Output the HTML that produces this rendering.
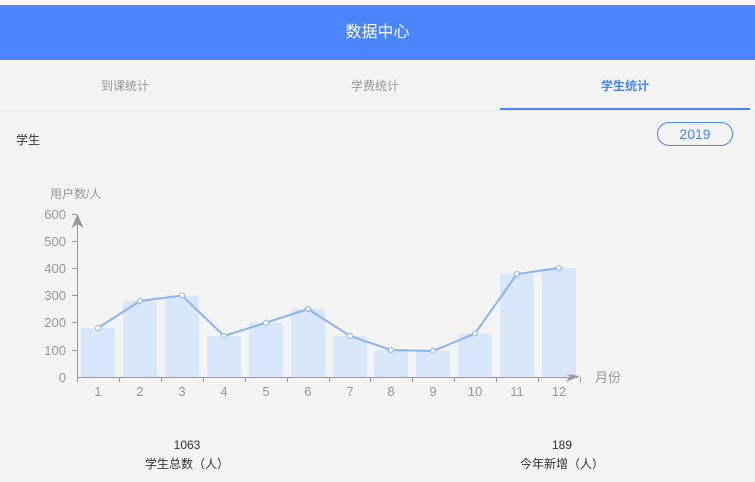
<!DOCTYPE html>
<html><head><meta charset="utf-8"><style>
body{margin:0;width:755px;height:482px;background:#f4f4f4;font-family:"Liberation Sans","Noto Sans CJK SC",sans-serif;position:relative;overflow:hidden}
.hd{position:absolute;top:5px;left:0;width:755px;height:55px;background:#4a84ff;color:#fff;font-size:16px;text-align:center;line-height:55px}
.tab{position:absolute;top:60px;height:50px;line-height:52px;font-size:12px;color:#999;text-align:center;width:250px}
.line{position:absolute;top:110px;left:0;width:755px;height:1px;background:#e6ecf5}
.ul{position:absolute;top:108px;left:500px;width:250px;height:2px;background:#4a84ff}
.t{position:absolute;font-size:12px;color:#333}
.yr{position:absolute;left:657px;top:122px;width:74px;height:22px;border:1px solid #4a84ff;border-radius:12px;color:#4a84ff;font-size:14px;text-align:center;line-height:22px}
.st{position:absolute;text-align:center;font-size:12px;color:#333;width:120px;line-height:19px}
</style></head><body>
<div class="hd">数据中心</div>
<div class="tab" style="left:0">到课统计</div>
<div class="tab" style="left:250px">学费统计</div>
<div class="tab" style="left:500px;color:#4a84ff;font-weight:bold">学生统计</div>
<div class="line"></div><div class="ul"></div>
<div class="t" style="left:16px;top:131px">学生</div>
<div class="yr">2019</div>
<svg width="755" height="482" style="position:absolute;left:0;top:0" font-family="Liberation Sans,Noto Sans CJK SC,sans-serif">
<g fill="#d8e7fb">
<rect x="81" y="328" width="34" height="49"/><rect x="123" y="301" width="34" height="76"/><rect x="165" y="295.5" width="34" height="81.5"/><rect x="207" y="336" width="34" height="41"/><rect x="249" y="322.7" width="34" height="54.3"/><rect x="291" y="309" width="34" height="68"/><rect x="333" y="336" width="34" height="41"/><rect x="374" y="350" width="34" height="27"/><rect x="416" y="351" width="34" height="26"/><rect x="458" y="333.5" width="34" height="43.5"/><rect x="500" y="274" width="34" height="103"/><rect x="542" y="268" width="34" height="109"/>
</g>
<g fill="#999" font-size="13" text-anchor="end">
<text x="66" y="219">600</text><text x="66" y="246">500</text><text x="66" y="273">400</text><text x="66" y="300">300</text><text x="66" y="327">200</text><text x="66" y="355">100</text><text x="66" y="382">0</text>
</g>
<text x="50" y="198" fill="#999" font-size="12">用户数/人</text>
<text x="595" y="382" fill="#999" font-size="13">月份</text>
<g stroke="#999" stroke-width="1">
<line x1="77.5" y1="222" x2="77.5" y2="377"/><line x1="77" y1="377.5" x2="578" y2="377.5"/>
<line x1="72" y1="214.5" x2="77" y2="214.5"/><line x1="72" y1="241.5" x2="77" y2="241.5"/><line x1="72" y1="268.5" x2="77" y2="268.5"/><line x1="72" y1="295.5" x2="77" y2="295.5"/><line x1="72" y1="322.5" x2="77" y2="322.5"/><line x1="72" y1="350.5" x2="77" y2="350.5"/>
<path d="M77.5 377v5M119.5 377v5M161.5 377v5M203.5 377v5M245.5 377v5M287.5 377v5M329.5 377v5M370.5 377v5M412.5 377v5M454.5 377v5M496.5 377v5M538.5 377v5M580.5 377v5"/>
</g>
<path d="M77.5 214l-6 14 6-4 6 4z" fill="#999"/>
<path d="M580 376l-14 6 4-6-4-2z" fill="#999"/>
<g fill="#999" font-size="13" text-anchor="middle">
<text x="98" y="396">1</text><text x="140" y="396">2</text><text x="182" y="396">3</text><text x="224" y="396">4</text><text x="266" y="396">5</text><text x="308" y="396">6</text><text x="350" y="396">7</text><text x="391" y="396">8</text><text x="433" y="396">9</text><text x="475" y="396">10</text><text x="517" y="396">11</text><text x="559" y="396">12</text>
</g>
<polyline fill="none" stroke="#8ab4f8" stroke-width="2" points="98,328 140,301 182,295.5 224,336 266,322.7 308,309 350,336 391,350 433,351 475,333.5 517,274 559,268"/>
<g fill="#fff" stroke="#8ab4f8" stroke-width="1">
<circle cx="98" cy="328" r="2.5"/><circle cx="140" cy="301" r="2.5"/><circle cx="182" cy="295.5" r="2.5"/><circle cx="224" cy="336" r="2.5"/><circle cx="266" cy="322.7" r="2.5"/><circle cx="308" cy="309" r="2.5"/><circle cx="350" cy="336" r="2.5"/><circle cx="391" cy="350" r="2.5"/><circle cx="433" cy="351" r="2.5"/><circle cx="475" cy="333.5" r="2.5"/><circle cx="517" cy="274" r="2.5"/><circle cx="559" cy="268" r="2.5"/>
</g>
</svg>
<div class="st" style="left:127px;top:436px">1063<br>学生总数（人）</div>
<div class="st" style="left:502px;top:436px">189<br>今年新增（人）</div>
</body></html>
